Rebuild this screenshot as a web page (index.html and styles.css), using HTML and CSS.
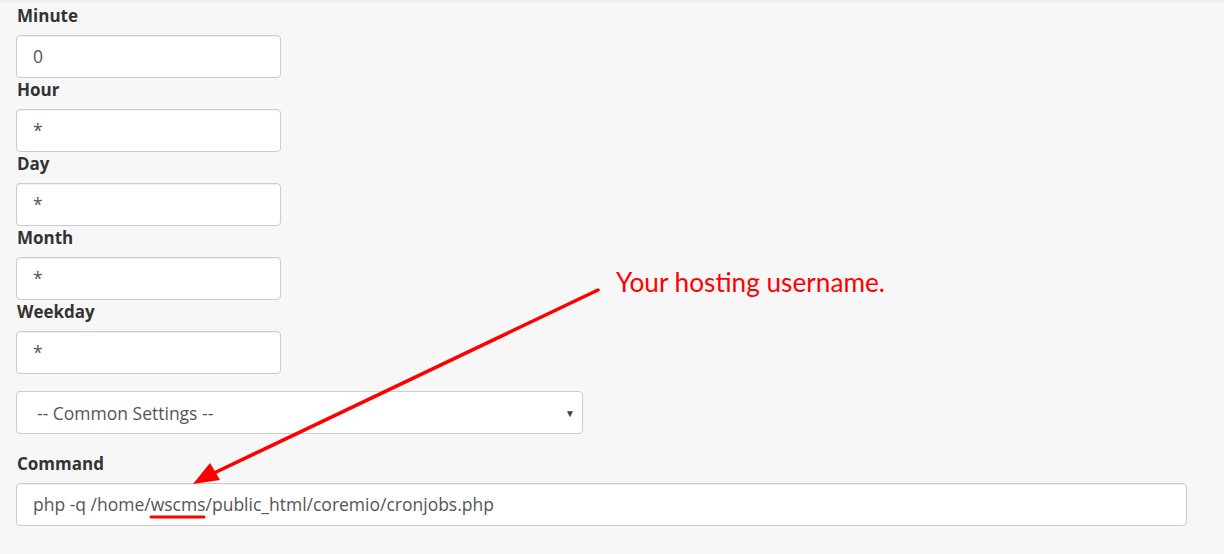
FILE: index.html
```html
<!DOCTYPE html>
<html>
<head>
<meta charset="utf-8">
<link rel="stylesheet" href="styles.css">
</head>
<body>
<div class="page">
  <form class="form">
    <div class="field">
      <label class="label">Minute</label>
      <div class="input small">0</div>
    </div>
    <div class="field">
      <label class="label">Hour</label>
      <div class="input small">*</div>
    </div>
    <div class="field">
      <label class="label">Day</label>
      <div class="input small">*</div>
    </div>
    <div class="field">
      <label class="label">Month</label>
      <div class="input small">*</div>
    </div>
    <div class="field">
      <label class="label">Weekday</label>
      <div class="input small">*</div>
    </div>
    <div class="select">
      <span class="select-text">-- Common Settings --</span>
      <span class="caret">&#9660;</span>
    </div>
    <div class="field command">
      <label class="label">Command</label>
      <div class="input wide">php -q /home/wscms/public_html/coremio/cronjobs.php</div>
    </div>
  </form>
  <div class="note">Your hosting username.</div>
  <svg class="annot" width="1224" height="554" viewBox="0 0 1224 554">
    <line x1="598" y1="290" x2="212" y2="474" stroke="#ff0000" stroke-width="3.5" stroke-linecap="round"/>
    <polygon points="193,484 210,463 220,480" fill="#ff0000"/>
    <line x1="151" y1="517" x2="204" y2="517" stroke="#ff0000" stroke-width="3" stroke-linecap="round"/>
  </svg>
</div>
</body>
</html>
```
FILE: styles.css
```css
html, body {
  margin: 0;
  padding: 0;
}
body {
  background: #f7f7f7;
  font-family: "Open Sans", "Liberation Sans", sans-serif;
  color: #333;
}
.page {
  position: relative;
  width: 1224px;
  height: 554px;
  overflow: hidden;
  border-top: 3px solid #efefef;
  box-sizing: border-box;
}
.form {
  display: flex;
  flex-direction: column;
  padding-left: 16px;
  padding-top: 1px;
}
.field {
  display: flex;
  flex-direction: column;
}
.label {
  font-size: 17px;
  font-weight: 700;
  line-height: 24px;
  margin-bottom: 7px;
  padding-left: 1px;
  color: #333;
}
.input {
  box-sizing: border-box;
  height: 43px;
  background: #fff;
  border: 1px solid #ccc;
  border-radius: 4px;
  box-shadow: inset 0 1px 1px rgba(0,0,0,0.06);
  font-size: 17.5px;
  line-height: 41px;
  color: #555;
  padding-left: 16px;
}
.small { width: 265px; }
.wide { width: 1171px; }
.select {
  box-sizing: border-box;
  margin-top: 17px;
  width: 567px;
  height: 43px;
  background: #fff;
  border: 1px solid #ccc;
  border-radius: 4px;
  display: flex;
  align-items: center;
  justify-content: space-between;
  padding: 0 7px 0 20px;
  font-size: 17.5px;
  color: #555;
}
.caret {
  font-size: 10px;
  color: #444;
}
.command {
  margin-top: 18px;
}
.note {
  position: absolute;
  left: 616px;
  top: 263px;
  font-family: "Lato", "Open Sans", sans-serif;
  font-size: 26.2px;
  color: #ff0000;
}
.annot {
  position: absolute;
  left: 0;
  top: -3px;
}
```
